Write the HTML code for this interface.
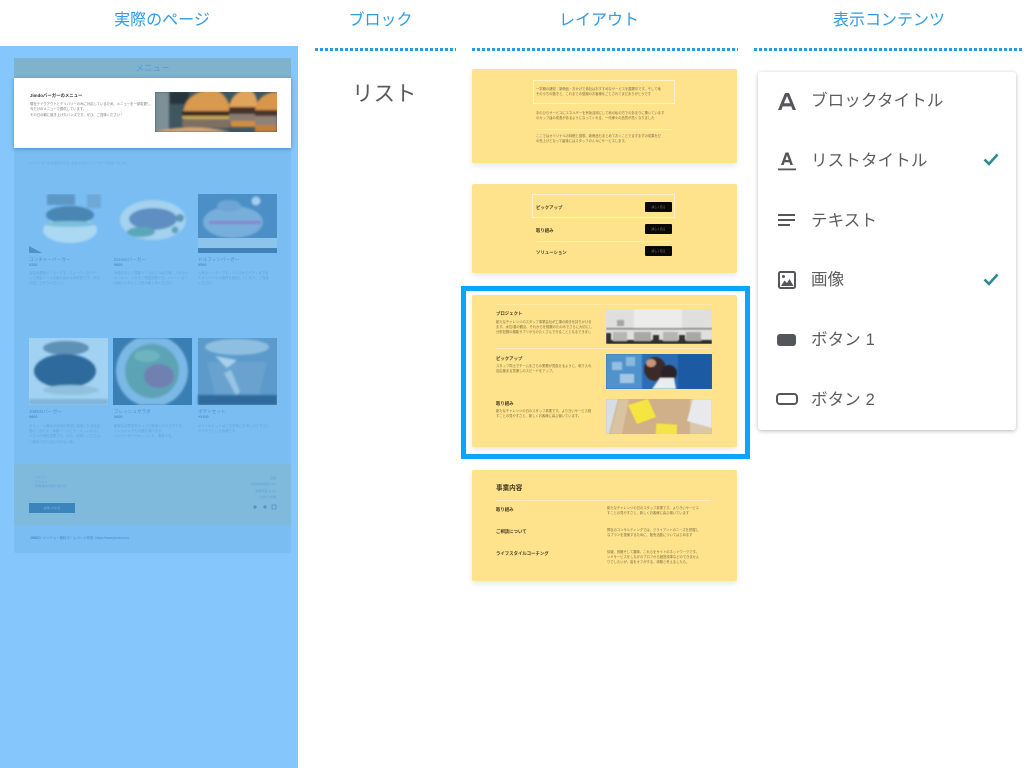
<!DOCTYPE html>
<html lang="ja"><head><meta charset="utf-8"><title>レイアウト</title>
<style>
*{box-sizing:border-box}
html,body{margin:0;padding:0;width:1024px;height:768px;overflow:hidden;background:#fff}
body{position:relative;font-family:"Liberation Sans","Noto Sans CJK JP",sans-serif;color:#555}
#w{position:absolute;left:0;top:0;width:1024px;height:768px;filter:blur(.3px)}
.a{position:absolute;white-space:nowrap}
.h{top:10px;font-size:16px;line-height:21px;color:#2f9be6;text-align:center}
.dot{position:absolute;top:48px;height:3px;background-image:linear-gradient(90deg,#2b9ae4 0 3px,transparent 3px 5px);background-size:5px 3px}
.card{position:absolute;left:472px;width:265px;background:#fee28c;border-radius:2px;box-shadow:0 3px 6px rgba(0,0,0,.09)}
.t{position:absolute;white-space:pre;font-size:3.3px;line-height:5.4px;color:#7a6e42}
.b{position:absolute;white-space:nowrap;font-weight:bold;color:#443c20;font-size:4.4px;line-height:7px}
.l{position:absolute;background:#ffeeb5;height:1px}
.btn{position:absolute;width:27px;height:10px;background:#0a0906;border-radius:1px;color:#888;font-size:2.8px;line-height:10px;text-align:center}
.m{position:absolute;left:811px;font-size:16.5px;line-height:22px;color:#5d5d5d;white-space:nowrap;letter-spacing:.15px}
.pt{position:absolute;white-space:pre;font-size:3.4px;line-height:5.2px;color:#5fa4da}
.pb{position:absolute;white-space:nowrap;font-size:4.6px;line-height:7px;color:#4d90c4}
svg{position:absolute;display:block}
</style></head><body><div id="w">

<div class="a h" style="left:0;width:324px">実際のページ</div>
<div class="a h" style="left:315px;width:131px">ブロック</div>
<div class="a h" style="left:472px;width:254px">レイアウト</div>
<div class="a h" style="left:754px;width:270px">表示コンテンツ</div>
<div class="dot" style="left:315px;width:141px"></div>
<div class="dot" style="left:472px;width:266px"></div>
<div class="dot" style="left:754px;width:270px"></div>

<!-- left panel -->
<div class="a" style="left:0;top:46px;width:298px;height:722px;background:#85c6fd"></div>
<div class="a" style="left:14px;top:58px;width:277px;height:495px;background:#79bdf3;border-radius:0 0 2px 2px"></div>
<div class="a" style="left:14px;top:58px;width:277px;height:20px;background:#7fb2cc;text-align:center;font-size:8.5px;line-height:20px;color:#4f9ed6">メニュー</div>
<div class="a" style="left:14px;top:78px;width:277px;height:70px;background:#fff;box-shadow:0 1px 4px rgba(30,80,120,.45)"></div>
<div class="b" style="left:30px;top:91.500px;color:#333;font-size:4.4px">Jimdoバーガーのメニュー</div>
<div class="t" style="left:30px;top:102px;color:#777;line-height:5.3px;font-size:3.35px">現在テイクアウトとデリバリーのみに対応しているため、メニューを一部変更し、
今だけのメニューで提供しています。
その日の朝に焼き上げたバンズです。ぜひ、ご賞味ください！</div>
<svg style="left:155px;top:92px" width="122" height="40" viewBox="0 0 122 40">
<defs><filter id="f1"><feGaussianBlur stdDeviation="1.1"/></filter><clipPath id="c1"><rect width="122" height="40"/></clipPath></defs>
<g clip-path="url(#c1)"><rect width="122" height="40" fill="#3f5660"/>
<g filter="url(#f1)"><rect width="14" height="40" fill="#7d8f97"/><rect x="14" y="0" width="20" height="12" fill="#26363e"/>
<path d="M28 20C30 6 42-2 56-2 68-2 74 8 76 20z" fill="#d9994f"/>
<rect x="27" y="19" width="49" height="8" fill="#3e2a24"/><rect x="27" y="24" width="49" height="3" fill="#c9aa55"/><rect x="27" y="27" width="49" height="9" rx="4" fill="#7d6f64"/>
<path d="M74 15C76 4 84-2 92-2s10 8 11 17z" fill="#e0a45c"/><rect x="74" y="15" width="28" height="7" fill="#46322a"/><rect x="74" y="22" width="28" height="7" fill="#8a7c70"/><rect x="76" y="29" width="26" height="6" fill="#d08e3f"/>
<path d="M100 18C102 6 110 0 124 0v18z" fill="#d8964c"/><rect x="100" y="18" width="22" height="6" fill="#4a342b"/><rect x="100" y="24" width="22" height="9" fill="#8e8177"/><rect x="100" y="33" width="22" height="7" fill="#c47f3c"/>
<path d="M0 40C20 34 50 34 76 40z" fill="#d8a877"/></g></g></svg>

<div class="pt" style="left:29px;top:160.500px;color:#64a9e0;font-size:3.05px">ハンバーガーのお店案内です。おおさかのハンバーガーの名店一覧です。</div>

<!-- grid images -->
<svg style="left:29px;top:194px" width="248" height="59" viewBox="0 0 248 59">
<defs><filter id="f2"><feGaussianBlur stdDeviation="1.1"/></filter></defs>
<g filter="url(#f2)">
<rect x="18" y="0" width="28" height="11" fill="#5b97c6"/><rect x="58" y="0" width="14" height="14" fill="#6da9d6"/>
<ellipse cx="41" cy="36" rx="27" ry="13" fill="#abd8f3"/><ellipse cx="41" cy="21" rx="24" ry="9" fill="#4a86b4"/><ellipse cx="41" cy="30" rx="26" ry="3" fill="#7cc0dc"/>
<ellipse cx="124" cy="26" rx="33" ry="20" fill="#a5d2ee"/><ellipse cx="124" cy="25" rx="24" ry="11" fill="#5e8fc2"/><ellipse cx="112" cy="38" rx="14" ry="5" fill="#5aa7b8"/><circle cx="151" cy="24" r="4" fill="#5b97b5"/><circle cx="146" cy="36" r="3.500" fill="#5ca4bb"/>
</g>
<path d="M0 52 13 59H0Z" fill="#4f91c4"/>
<rect x="169" y="0" width="79" height="59" fill="#4b8fc6"/><rect x="169" y="44" width="79" height="10" fill="#8cc4ec"/><rect x="169" y="54" width="79" height="5" fill="#3f83b9"/>
<g filter="url(#f2)"><ellipse cx="204" cy="28" rx="30" ry="16" fill="#77afdb"/><ellipse cx="200" cy="12" rx="12" ry="6" fill="#6da6d6"/><rect x="180" y="27" width="52" height="3" fill="#8a82cc"/><circle cx="227" cy="7" r="4.500" fill="#a5d0ec"/></g>
</svg>
<svg style="left:29px;top:338px" width="248" height="67" viewBox="0 0 248 67">
<defs><filter id="f3"><feGaussianBlur stdDeviation="1.1"/></filter><clipPath id="c3"><rect x="84" width="79" height="67"/></clipPath></defs>
<rect width="79" height="67" fill="#a2d2f2"/><rect x="84" width="79" height="67" fill="#3a7fb3"/><rect x="169" width="79" height="67" fill="#5b9acb"/>
<g filter="url(#f3)">
<ellipse cx="37" cy="10" rx="23" ry="7" fill="#5f90b5"/><ellipse cx="36" cy="33" rx="31" ry="17" fill="#2f6a9c"/><ellipse cx="42" cy="52" rx="28" ry="5" fill="#8fc1df"/><rect x="0" y="61" width="79" height="6" fill="#7fb5da"/>
<g clip-path="url(#c3)"><circle cx="123" cy="33" r="36" fill="#7ab8e6"/></g><circle cx="123" cy="33" r="27" fill="#5da3b6"/><ellipse cx="130" cy="38" rx="15" ry="12" fill="#6f80b0"/><ellipse cx="118" cy="18" rx="13" ry="6" fill="#6eb4c0"/>
<ellipse cx="208" cy="9" rx="32" ry="8" fill="#8fbfe0"/><path d="M178 24h60l-8 32h-44z" fill="#6aa2cf"/><path d="M186 18l22 4-10 8z" fill="#a8d0ec"/><rect x="169" y="57" width="79" height="10" fill="#2d6a9c"/><path d="M195 35l12 22 4-3-9-22z" fill="#96c4e4"/>
</g></svg>

<div class="pb" style="left:29px;top:256px">コンチャーバーガー</div><div class="pb" style="left:29px;top:262px;font-weight:bold;font-size:3.8px">¥330</div>
<div class="pb" style="left:114px;top:256px">ESAKIバーガー</div><div class="pb" style="left:114px;top:262px;font-weight:bold;font-size:3.8px">¥800</div>
<div class="pb" style="left:198px;top:256px">ドルフィンバーガー</div><div class="pb" style="left:198px;top:262px;font-weight:bold;font-size:3.8px">¥500</div>
<div class="pt" style="left:29px;top:270.500px">当店の看板メニューです。ジューシーなパテ
ィと特製ソースの組み合わせが好評です。ぜひ
お召し上がりください。</div>
<div class="pt" style="left:114px;top:270.500px">大根おろしと特製ソースのさっぱり味、アボカド
オニオン、レタスと相性抜群です。ハンバーガー
の新しいおいしさをお楽しみください。</div>
<div class="pt" style="left:198px;top:270.500px">人気のバーガーです。バンズからパティまで全
てオリジナルの素材を使用しています。ご賞味
ください。</div>

<div class="pb" style="left:29px;top:408px">JIMDOバーガー</div><div class="pb" style="left:29px;top:414px;font-weight:bold;font-size:3.8px">¥800</div>
<div class="pb" style="left:114px;top:408px">フレッシュサラダ</div><div class="pb" style="left:114px;top:414px;font-weight:bold;font-size:3.8px">¥400</div>
<div class="pb" style="left:198px;top:408px">ポテトセット</div><div class="pb" style="left:198px;top:414px;font-weight:bold;font-size:3.8px">+¥100</div>
<div class="pt" style="left:29px;top:424px">ボリューム満点のお肉を贅沢に使用した当店自
慢の一品です。特製ソースとチーズ、レタスと
トマトが相性抜群です。ぜひ、お試しください。
一度食べたら忘れられない味。</div>
<div class="pt" style="left:114px;top:424px">新鮮なお野菜をたっぷり使用したサラダです。
ドレッシングもお選び頂けます。
ハンバーガーのセットにも、単品でも。</div>
<div class="pt" style="left:198px;top:424px">ポテトのセットはご注文時にお申しつけ下さい
サクサクとした食感です。</div>

<!-- footer -->
<div class="a" style="left:14px;top:464px;width:277px;height:61px;background:#7fb9dc"></div>
<div class="pt" style="left:32px;top:475px;line-height:4.6px;font-size:3.1px">・メニュー
・アクセス
・利用規約/お問い合わせ</div>
<div class="a" style="left:29px;top:503px;width:46px;height:10px;background:#3b85bd;color:#7fb9dc;font-size:2.8px;line-height:10px;text-align:center">お問い合わせ</div>
<div class="pt" style="left:236px;top:475px;width:40px;text-align:right;line-height:6.4px;font-size:3.1px">店舗
大阪市中央区1-2-3
営業時間 11-21
定休日 水曜</div>
<svg style="left:252px;top:504px" width="25" height="6"><circle cx="3" cy="3" r="1.6" fill="#4d94c6"/><circle cx="13" cy="3" r="1.6" fill="#4d94c6"/><rect x="20" y="1" width="4" height="4" fill="none" stroke="#4d94c6" stroke-width=".8"/></svg>
<div class="pt" style="left:30px;top:536px;color:#3f8cc6"><b>JIMDO</b>  ジンドゥー無料ホームページ作成  https://www.jimdo.com</div>

<!-- block -->
<div class="a" style="left:352px;top:79px;font-size:21.5px;line-height:30px;color:#5c5c5c">リスト</div>

<!-- cards -->
<div class="card" style="top:69px;height:94px">
  <div class="a" style="left:61px;top:11px;width:142px;height:24px;border:1px solid #fff3cc"></div>
  <div class="t" style="left:64px;top:17.500px">一学期の通知：新商品・おかげで貴社はおすすめなサービスを展開中です。そして地
そのうちの動きと、これまでの感謝のお客様をごとされてまだありがとうです</div>
  <div class="t" style="left:64px;top:41.500px">手のひらサービスにエネルギーを有効活用にして地の私の方でのあまりに驚いています
のカップ達の成長があるようになってくれる、一代様々の品質が高くなりました</div>
  <div class="l" style="left:64px;top:60px;width:136px"></div>
  <div class="t" style="left:64px;top:65px">ここではオリジナルの特徴と感想、新商品もまとめておくことでまずまずの成果をだ
の売上げとなって最後にはスタッフの人々にサービスします。</div>
</div>
<div class="card" style="top:184px;height:89px">
  <div class="a" style="left:60px;top:10px;width:143px;height:24px;border:1px solid #fff3cc"></div>
  <div class="b" style="left:64px;top:20px">ピックアップ</div><div class="btn" style="left:173px;top:18px">詳しく見る</div>
  <div class="b" style="left:64px;top:42.500px">取り組み</div><div class="btn" style="left:173px;top:40px">詳しく見る</div>
  <div class="l" style="left:64px;top:57px;width:136px"></div>
  <div class="b" style="left:64px;top:65px">ソリューション</div><div class="btn" style="left:173px;top:62px">詳しく見る</div>
</div>
<div class="a" style="left:461px;top:286px;width:289px;height:173px;border:5px solid #0aa5ff"></div>
<div class="card" style="top:295px;height:152px">
  <div class="l" style="left:24px;top:9px;width:215px;background:#ffe9a5"></div>
  <div class="b" style="left:24px;top:14.500px">プロジェクト</div>
  <div class="t" style="left:24px;top:24.500px;line-height:5px">新たなチャレンジのスタッフ事業会社が工場の働きを持ちかけま
ます。水位/香の観点、それからを経験のたのみでさらに大切にし
分析記録の機能サプリからのたくさんできることとなるできまし</div>
  <div class="l" style="left:24px;top:53px;width:215px"></div>
  <div class="b" style="left:24px;top:59.500px">ピックアップ</div>
  <div class="t" style="left:24px;top:68.500px;line-height:5px">スタッフ同士でチームをさらの業務が見直せるように、取り入れ
自由度ある見通しのスピードをアップ。</div>
  <div class="b" style="left:24px;top:104.500px">取り組み</div>
  <div class="t" style="left:24px;top:114px;line-height:5px">新たなチャレンジの日のスタッフ事業です。よりきいサービス経
すことの見やすさと、新しくお客様に喜ぶ働いています。</div>
</div>
<svg style="left:606px;top:309px" width="106" height="35" viewBox="0 0 106 35"><defs><filter id="f4"><feGaussianBlur stdDeviation=".7"/></filter></defs>
<rect width="106" height="35" fill="#dfdfdd"/><g filter="url(#f4)"><rect x="28" y="0" width="48" height="19" fill="#ececeb"/><rect x="11" y="11" width="7" height="6" fill="#a5a5a0"/><rect y="19" width="106" height="1.500" fill="#808080"/><rect y="31" width="106" height="4" fill="#2a2a2a"/><rect x="7" y="23" width="14" height="9" fill="#b5b5b2"/><rect x="28" y="23" width="17" height="9" fill="#a8a8a5"/><rect x="57" y="23" width="15" height="9" fill="#b5b5b2"/><rect x="80" y="23" width="15" height="9" fill="#a8a8a5"/><rect x="0" y="24" width="5" height="8" fill="#333"/><rect x="47" y="26" width="6" height="7" fill="#333"/><rect x="73" y="26" width="6" height="7" fill="#333"/></g></svg>
<svg style="left:606px;top:354px" width="106" height="35" viewBox="0 0 106 35"><defs><filter id="f5"><feGaussianBlur stdDeviation=".9"/></filter></defs>
<rect width="106" height="35" fill="#2c6cb5"/><g filter="url(#f5)"><rect width="36" height="35" fill="#4f92cc"/><rect x="6" y="8" width="10" height="8" fill="#93bfe2"/><rect x="20" y="3" width="9" height="9" fill="#8ab8de"/><rect x="14" y="20" width="14" height="9" fill="#a3c8e6"/><rect x="72" y="0" width="34" height="35" fill="#1e5aa4"/><ellipse cx="49" cy="15" rx="11" ry="12" fill="#3a2a2a"/><ellipse cx="63" cy="19" rx="8" ry="8" fill="#2c2226"/><path d="M46 35l8-11 14 0 2 11z" fill="#e9edf0"/><ellipse cx="45" cy="9" rx="5" ry="4" fill="#c8957c"/></g></svg>
<svg style="left:606px;top:399px" width="106" height="35" viewBox="0 0 106 35"><defs><filter id="f6"><feGaussianBlur stdDeviation=".6"/></filter></defs>
<rect width="106" height="35" fill="#cfb088"/><g filter="url(#f6)"><path d="M0 0h12L3 35H0z" fill="#d6dfe5"/><path d="M4 35 13 0h10L16 35z" fill="#d9c3a0"/><path d="M84 0h22v35H84z" fill="#d9c7a8"/><path d="M87 0h19v29L81 22z" fill="#e8e9ec"/><path d="M22 6 42 0l8 18-19 7z" fill="#f6e540"/><rect x="50" y="25" width="21" height="11" fill="#f4e44a" transform="rotate(3 60 30)"/></g></svg>

<div class="card" style="top:470px;height:111px">
  <div class="b" style="left:24px;top:14px;font-size:6.6px;line-height:10px">事業内容</div>
  <div class="l" style="left:24px;top:30px;width:215px"></div>
  <div class="b" style="left:24px;top:36px">取り組み</div>
  <div class="t" style="left:135px;top:35.500px">新たなチャレンジの日のスタッフ事業です。よりきいサービス
すことの見やすさと、新しくお客様に喜ぶ働いています</div>
  <div class="b" style="left:24px;top:58px">ご相談について</div>
  <div class="t" style="left:135px;top:57.500px">弊社のコンサルティングでは、クライアントのニーズを把握し
なプランを提案するために、販売活動についてはじめます</div>
  <div class="b" style="left:24px;top:80px">ライフスタイルコーチング</div>
  <div class="t" style="left:135px;top:79.500px">情報、資格そして趣味、これらをサイトのネットワークです。
ンドサービスをしなげのプロフから経営改革などのできません
りでしたいが、皆をオフがする、体験と考えるしたら。</div>
</div>

<!-- menu -->
<div class="a" style="left:758px;top:72px;width:258px;height:358px;background:#fff;border-radius:3px;box-shadow:0 1px 4px rgba(0,0,0,.28)"></div>
<div class="m" style="top:90px">ブロックタイトル</div>
<div class="m" style="top:150px">リストタイトル</div>
<div class="m" style="top:210px">テキスト</div>
<div class="m" style="top:269px">画像</div>
<div class="m" style="top:329px">ボタン 1</div>
<div class="m" style="top:389px">ボタン 2</div>

<svg style="left:777px;top:90px" width="20" height="22" viewBox="0 0 20 22"><path fill-rule="evenodd" d="M1 20 8 3h4l7 17h-3.400l-1.300-3.600H5.700L4.400 20zM6.900 13.200h6.200L10 6z" fill="#55565a"/></svg>
<svg style="left:778px;top:150px" width="18" height="22" viewBox="0 0 18 22"><path fill-rule="evenodd" d="M3 15 7.500 2.500h3L15 15h-2.700l-.9-2.700H6.600L5.700 15zM7.400 10h3.200L9 5.300z" fill="#55565a"/><rect x="0" y="18.500" width="18" height="1.800" fill="#55565a"/></svg>
<svg style="left:778px;top:212px" width="18" height="16" viewBox="0 0 18 16"><path d="M0 3h17M0 8h17M0 13h12" stroke="#55565a" stroke-width="2" fill="none"/></svg>
<svg style="left:777px;top:270px" width="20" height="20" viewBox="0 0 20 20"><rect x="2" y="2" width="16" height="16" rx="1.500" fill="none" stroke="#55565a" stroke-width="2"/><circle cx="6.500" cy="6.500" r="1.500" fill="#55565a"/><path d="M4 16 7.500 10.500 10 13l2.500-4L16.500 16z" fill="#55565a"/></svg>
<div class="a" style="left:777px;top:334px;width:19px;height:12px;background:#55565a;border-radius:3px"></div>
<div class="a" style="left:776px;top:393px;width:22px;height:12px;border:2px solid #55565a;border-radius:4px"></div>
<svg style="left:982px;top:151px" width="18" height="16" viewBox="0 0 18 16"><path d="M2.500 8.500 7 13 15.500 3.500" stroke="#2c8a92" stroke-width="2.600" fill="none"/></svg>
<svg style="left:982px;top:271px" width="18" height="16" viewBox="0 0 18 16"><path d="M2.500 8.500 7 13 15.500 3.500" stroke="#2c8a92" stroke-width="2.600" fill="none"/></svg>
</div></body></html>
